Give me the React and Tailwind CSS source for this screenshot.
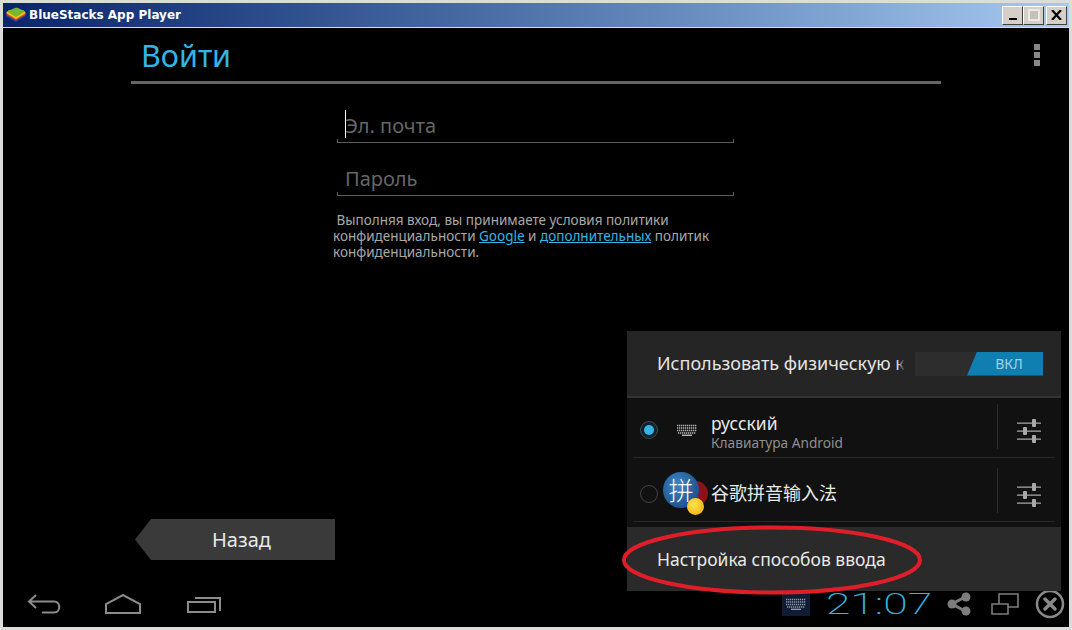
const droid = { fontFamily: '"Noto Sans", "Noto Sans CJK SC", sans-serif' }

function Keyboard({ className }) {
  return (
    <svg viewBox="0 0 20 12" className={className} fill="none" stroke="currentColor">
      <path d="M0 1.500h20M0 4h20M0 6.500h20" strokeWidth="1.400" strokeDasharray="1.300 .7" />
      <path d="M1 9h18" strokeWidth="1.400" strokeDasharray="1.300 .7" />
      <path d="M5 11.300h10" strokeWidth="1.400" />
    </svg>
  )
}

function Sliders() {
  return (
    <svg viewBox="0 0 24 24" className="size-6 text-[#a8a8a8]" fill="currentColor">
      <path d="M0 3.500h24v1.200H0zM0 11.500h24v1.200H0zM0 19.500h24v1.200H0z" />
      <rect x="15" y="0" width="4" height="8" rx="1" />
      <rect x="6" y="8" width="4" height="8" rx="1" />
      <rect x="15" y="16" width="4" height="8" rx="1" />
    </svg>
  )
}

function ImeRow({ rowClass, radio, icon, children }) {
  return (
    <div className={`flex items-start border-b border-[#2a2a2a] ${rowClass}`}>
      <div className="flex h-[51px] w-[78px] shrink-0 items-center pl-[7px]">
        {radio}
        {icon}
      </div>
      <div className="flex h-[51px] min-w-0 flex-1 items-center">{children}</div>
      <div className="flex h-[45px] w-[58px] items-center justify-center border-l border-[#2b2b2b] pl-[4px] pt-[8px]">
        <Sliders />
      </div>
    </div>
  )
}

function WinButton({ children, className = '' }) {
  return (
    <div className={`flex h-[19px] w-[21px] items-center justify-center border-t border-l border-white border-r border-b border-r-[#404040] border-b-[#404040] bg-[#d4d0c8] ${className}`}>
      {children}
    </div>
  )
}

function TitleBar() {
  return (
    <div className="flex h-[24px] items-center bg-gradient-to-r from-[#0a246a] to-[#a6caf0] pl-[3px] pr-[2px]">
      <svg viewBox="0 0 20 16" className="h-[16px] w-[20px]">
        <path d="M0 9l10 6 10-6-3-3H3z" fill="#2c3f92" />
        <path d="M0 7.500l10 6 10-6-3-3H3z" fill="#d8482a" />
        <path d="M0 6l10 6 10-6-3-3H3z" fill="#f0c020" />
        <path d="M1 4.500L9 1c1-.4 2-.4 3 0l7 3.500-9 5.500z" fill="#76b82a" />
      </svg>
      <span className="ml-[3px] text-[12px] font-bold text-white" style={{ fontFamily: '"DejaVu Sans", sans-serif' }}>
        BlueStacks App Player
      </span>
      <div className="ml-auto flex">
        <WinButton>
          <span className="mt-[8px] h-[2px] w-[8px] bg-black" />
        </WinButton>
        <WinButton>
          <span className="size-[12px] border-2 border-[#ece9e2] bg-[#c4c1b9]" />
        </WinButton>
        <WinButton className="ml-[2px]">
          <svg viewBox="0 0 11 10" className="h-[10px] w-[11px]" fill="none" stroke="#000" strokeWidth="2.200">
            <path d="M1 0l9 10M10 0l-9 10" />
          </svg>
        </WinButton>
      </div>
    </div>
  )
}

function ImePopup() {
  return (
    <div className="absolute left-[624px] top-[303px] w-[434px] bg-[#111]" style={droid}>
      <div className="flex h-[67px] items-center border-b-2 border-[#333] bg-[#252525] pl-[30px] pr-[18px]">
        <div className="relative whitespace-nowrap text-[18px] text-[#e4e4e4]">
          Использовать физическую к
          <span className="absolute inset-y-0 right-0 w-[8px] bg-gradient-to-r from-transparent to-[#252525]" />
        </div>
        <div className="relative ml-auto flex h-[24px] w-[128px] shrink-0 justify-end bg-[#2d2d2d]">
          <div className="flex w-[76px] items-center justify-center bg-[#0e7fb0] pl-[8px] text-[14px] text-[#9fcfe4] [clip-path:polygon(10px_0,100%_0,100%_100%,0_100%)]">
            ВКЛ
          </div>
        </div>
      </div>
      <div className="px-[6px]">
        <ImeRow
          rowClass="h-[60px] pt-[6px]"
          radio={
            <span className="flex size-[18px] items-center justify-center rounded-full border border-[#3d4a52] bg-[#10222c]">
              <span className="size-[10px] rounded-full bg-[#33b5e5]" />
            </span>
          }
          icon={<Keyboard className="ml-[19px] h-[12px] w-[20px] text-[#b8b8b8]" />}
        >
          <div className="mt-[6px]">
            <div className="text-[17.500px] leading-[20px] text-[#e8e8e8]">русский</div>
            <div className="text-[13.700px] leading-[20px] text-[#8f8f8f]">Клавиатура Android</div>
          </div>
        </ImeRow>
        <ImeRow
          rowClass="h-[64px] pt-[10px]"
          radio={<span className="size-[18px] rounded-full border border-[#444]" />}
          icon={
            <span className="relative mb-[8px] ml-[5px] size-[36px] shrink-0">
              <span className="absolute -right-[9px] top-[9px] size-[25px] rounded-full bg-[#8e1018]" />
              <span className="absolute inset-0 flex items-center justify-center rounded-full bg-radial-[at_40%_35%] from-[#3d86c6] to-[#123f78] text-[25px] font-light text-white" style={{ fontFamily: '"Noto Sans CJK SC", sans-serif' }}>
                拼
              </span>
              <span className="absolute -bottom-[7px] -right-[5px] size-[17px] rounded-full bg-radial-[at_40%_35%] from-[#ffe34d] to-[#eda806]" />
            </span>
          }
        >
          <div className="text-[18px] text-[#e8e8e8]">谷歌拼音输入法</div>
        </ImeRow>
      </div>
      <div className="mt-[5px] flex h-[64px] items-center bg-[#2a2a2a] pl-[30px] text-[17.500px] text-[#e8e8e8]">
        Настройка способов ввода
      </div>
    </div>
  )
}

function InputLine({ className, children }) {
  return (
    <div className={`relative border-b border-[#5c5c5c] pl-[8px] text-[20px] leading-[28px] text-[#666] ${className}`}>
      <span className="absolute bottom-0 left-0 h-[3px] w-px bg-[#5c5c5c]" />
      <span className="absolute bottom-0 right-0 h-[3px] w-px bg-[#5c5c5c]" />
      {children}
    </div>
  )
}

export default function App() {
  return (
    <div className="flex h-[630px] w-[1072px] flex-col overflow-hidden bg-[#dcdcd8] p-[3px]">
      <TitleBar />
      <div className="relative mt-px flex flex-1 flex-col bg-black" style={droid}>
        <div className="ml-[128px] h-[56px] w-[810px] border-b-[3px] border-[#666] pl-[10px] pt-[7px] text-[30.500px] leading-[40px] text-[#33b5e5]">
          Войти
        </div>
        <div className="absolute right-[29px] top-[16px] flex flex-col gap-[2px]">
          <span className="size-[6px] bg-[#888]" />
          <span className="size-[6px] bg-[#888]" />
          <span className="size-[6px] bg-[#888]" />
        </div>

        <div className="ml-[334px] mt-[16px] w-[397px]">
          <InputLine className="h-[43px] pt-[12px]">
            <span className="absolute left-[8px] top-[10px] h-[28px] w-px bg-white" />
            Эл. почта
          </InputLine>
          <InputLine className="mt-[8px] h-[45px] pt-[14px]">Пароль</InputLine>
        </div>
        <p className="ml-[330px] mt-[16px] w-[400px] text-[13.500px] leading-[16px] text-[#a8a8a8]">
          &nbsp;Выполняя вход, вы принимаете условия политики
          <br />
          конфиденциальности <span className="text-[#33b5e5] underline">Google</span> и{' '}
          <span className="text-[#33b5e5] underline">дополнительных</span> политик
          <br />
          конфиденциальности.
        </p>

        <div className="ml-[132px] mt-auto flex h-[41px] w-[200px] items-center justify-center bg-[#3a3a3a] pl-[13px] text-[20px] text-[#e8e8e8] [clip-path:polygon(16px_0,100%_0,100%_100%,16px_100%,0_50%)]">
          Назад
        </div>

        <div className="mt-[20px] flex h-[47px] items-center pl-[24px] pr-[4px] text-[#8c8c8c]">
          <svg viewBox="0 0 34 20" className="h-[20px] w-[34px]" fill="none" stroke="currentColor" strokeWidth="2">
            <path d="M9 1L2 7.500l7 6.500M2 7.500h25c7 0 7 11 0 11H15" />
          </svg>
          <svg viewBox="0 0 36 20" className="ml-[44px] h-[20px] w-[36px]" fill="none" stroke="currentColor" strokeWidth="2">
            <path d="M1 19V10L18 1l17 9v9z" />
          </svg>
          <svg viewBox="0 0 34 20" className="ml-[46px] h-[20px] w-[34px]" fill="none" stroke="currentColor" strokeWidth="2">
            <path d="M1 8h27v10H1zM8 4h25v13" />
          </svg>
          <div className="ml-auto flex items-center">
            <div className="flex h-[24px] w-[28px] items-center justify-center bg-[#0f1c33]">
              <Keyboard className="h-[12px] w-[20px] text-[#8f97a4]" />
            </div>
            <span className="ml-[17px] w-[104px] scale-x-[1.48] text-center text-[30px] font-extralight leading-none text-[#33b5e5]" style={{ fontFamily: 'Roboto, sans-serif' }}>21:07</span>
            <svg viewBox="0 0 24 24" className="ml-[16px] size-[24px] text-[#7d7d7d]" fill="currentColor" stroke="currentColor">
              <path d="M18 5L5 12l13 7" fill="none" strokeWidth="3" />
              <circle cx="19" cy="5" r="4.500" stroke="none" />
              <circle cx="5" cy="12" r="4.500" stroke="none" />
              <circle cx="19" cy="19" r="4.500" stroke="none" />
            </svg>
            <svg viewBox="0 0 28 22" className="ml-[20px] h-[22px] w-[28px] text-[#7d7d7d]" fill="none" stroke="currentColor" strokeWidth="1.600">
              <path d="M1 11h16v10H1zM8 11V1h19v13H17" />
            </svg>
            <svg viewBox="0 0 30 30" className="ml-[16px] size-[30px] text-[#8a8a8a]" fill="none" stroke="currentColor">
              <circle cx="15" cy="15" r="13" strokeWidth="2.500" />
              <path d="M10 10l10 10M20 10L10 20" strokeWidth="3.500" strokeLinecap="round" />
            </svg>
          </div>
        </div>

        <ImePopup />

        <svg viewBox="0 0 300 70" className="pointer-events-none absolute left-[619px] top-[497px] h-[70px] w-[300px]" fill="none">
          <ellipse cx="150" cy="35" rx="148" ry="32.500" stroke="#e01e2a" strokeWidth="4" />
        </svg>
      </div>
    </div>
  )
}
